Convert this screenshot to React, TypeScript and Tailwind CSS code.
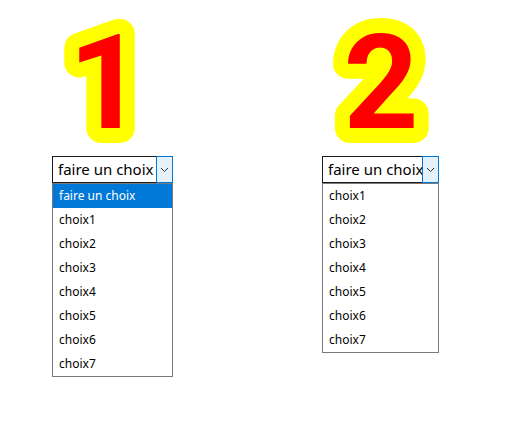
import React from "react";

// ── Big outlined digit ────────────────────────────────────────────────────────

function Digit({ label, width, x }: { label: string; width: number; x: number }) {
  return (
    <svg width={width} height={156} className="block overflow-visible">
      <text
        x={x}
        y={128}
        textAnchor="middle"
        fontFamily="Roboto, Arial, sans-serif"
        fontWeight={700}
        fontSize={131}
        fill="#ff0000"
        stroke="#ffff00"
        strokeWidth={30}
        strokeLinejoin="round"
        paintOrder="stroke"
      >
        {label}
      </text>
    </svg>
  );
}

// ── Open select (static) ──────────────────────────────────────────────────────

function OpenSelect({ width, withPlaceholder }: { width: number; withPlaceholder: boolean }) {
  const items = ["choix1", "choix2", "choix3", "choix4", "choix5", "choix6", "choix7"];
  return (
    <div className="flex flex-col" style={{ width }}>
      <div className="flex h-[27px] w-full">
        <div className="flex-1 min-w-0 overflow-hidden border border-[#1a1a1a] border-r-0 flex items-center pl-[5px] text-[15px] leading-none text-black whitespace-nowrap">
          faire un choix
        </div>
        <div className="w-[17px] shrink-0 border border-[#0078d7] bg-[#e5f1fb] flex items-center justify-center">
          <svg width="9" height="6" viewBox="0 0 9 6">
            <polyline points="1,1 4.5,4.5 8,1" fill="none" stroke="#333" strokeWidth="1" />
          </svg>
        </div>
      </div>
      <div className="w-full border border-[#7a7a7a] flex flex-col text-[12px] text-black">
        {withPlaceholder && (
          <div className="h-[24px] flex items-center pl-[6px] bg-[#0078d7] text-white">faire un choix</div>
        )}
        {items.map((it) => (
          <div key={it} className="h-[24px] flex items-center pl-[6px]">
            {it}
          </div>
        ))}
      </div>
    </div>
  );
}

export default function App() {
  return (
    <div
      className="w-[518px] h-[430px] bg-white flex items-start pl-[52px] gap-[149px]"
      style={{ fontFamily: "'Noto Sans', 'Open Sans', sans-serif" }}
    >
      <div className="flex flex-col">
        <Digit label="1" width={121} x={54} />
        <OpenSelect width={121} withPlaceholder />
      </div>
      <div className="flex flex-col">
        <Digit label="2" width={117} x={59} />
        <OpenSelect width={117} withPlaceholder={false} />
      </div>
    </div>
  );
}
